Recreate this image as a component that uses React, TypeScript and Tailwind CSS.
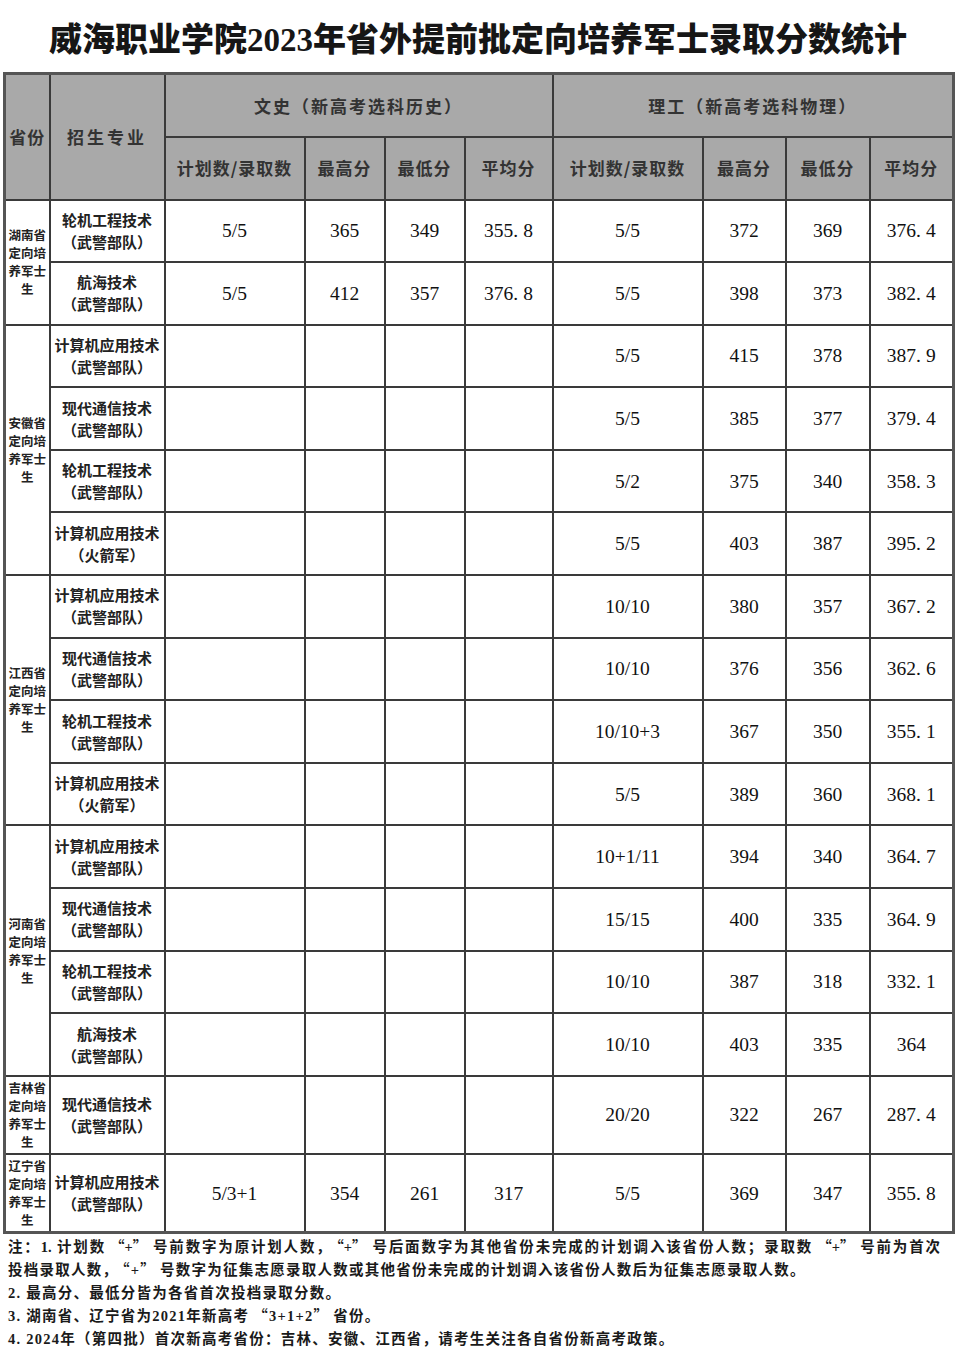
import React from 'react';

type Row = {
  major: string;
  sub: string;
  wen?: [string, string, string, string];
  li: [string, string, string, string];
};

type Group = { province: string; rows: Row[]; tall?: boolean };

const groups: Group[] = [
  {
    province: '湖南省定向培养军士生',
    rows: [
      { major: '轮机工程技术', sub: '（武警部队）', wen: ['5/5', '365', '349', '355.8'], li: ['5/5', '372', '369', '376.4'] },
      { major: '航海技术', sub: '（武警部队）', wen: ['5/5', '412', '357', '376.8'], li: ['5/5', '398', '373', '382.4'] },
    ],
  },
  {
    province: '安徽省定向培养军士生',
    rows: [
      { major: '计算机应用技术', sub: '（武警部队）', li: ['5/5', '415', '378', '387.9'] },
      { major: '现代通信技术', sub: '（武警部队）', li: ['5/5', '385', '377', '379.4'] },
      { major: '轮机工程技术', sub: '（武警部队）', li: ['5/2', '375', '340', '358.3'] },
      { major: '计算机应用技术', sub: '（火箭军）', li: ['5/5', '403', '387', '395.2'] },
    ],
  },
  {
    province: '江西省定向培养军士生',
    rows: [
      { major: '计算机应用技术', sub: '（武警部队）', li: ['10/10', '380', '357', '367.2'] },
      { major: '现代通信技术', sub: '（武警部队）', li: ['10/10', '376', '356', '362.6'] },
      { major: '轮机工程技术', sub: '（武警部队）', li: ['10/10+3', '367', '350', '355.1'] },
      { major: '计算机应用技术', sub: '（火箭军）', li: ['5/5', '389', '360', '368.1'] },
    ],
  },
  {
    province: '河南省定向培养军士生',
    rows: [
      { major: '计算机应用技术', sub: '（武警部队）', li: ['10+1/11', '394', '340', '364.7'] },
      { major: '现代通信技术', sub: '（武警部队）', li: ['15/15', '400', '335', '364.9'] },
      { major: '轮机工程技术', sub: '（武警部队）', li: ['10/10', '387', '318', '332.1'] },
      { major: '航海技术', sub: '（武警部队）', li: ['10/10', '403', '335', '364'] },
    ],
  },
  {
    province: '吉林省定向培养军士生',
    tall: true,
    rows: [{ major: '现代通信技术', sub: '（武警部队）', li: ['20/20', '322', '267', '287.4'] }],
  },
  {
    province: '辽宁省定向培养军士生',
    tall: true,
    rows: [
      { major: '计算机应用技术', sub: '（武警部队）', wen: ['5/3+1', '354', '261', '317'], li: ['5/5', '369', '347', '355.8'] },
    ],
  },
];

const cjk = '"Noto Sans CJK SC", "Noto Sans", sans-serif';
const serif = '"Liberation Serif", "Noto Sans CJK SC", serif';

// decimal point in the scan is set wide, like a full-width dot
const Num = ({ v }: { v: string }) => {
  const i = v.indexOf('.');
  if (i < 0 || v.includes('/')) return <>{v}</>;
  return (
    <>
      {v.slice(0, i)}
      <span className="mr-[5px]">.</span>
      {v.slice(i + 1)}
    </>
  );
};

// curly quotes in the scan take a full em each
const Q = ({ t }: { t: string }) => (
  <span className="mx-[4px]">
    “<span style={{ fontFamily: serif }}>{t}</span>”
  </span>
);

const S = ({ t }: { t: string }) => (
  <span className="whitespace-pre" style={{ fontFamily: serif }}>
    {t}
  </span>
);

const td = 'border-2 border-[#3a3a3a] text-center align-middle p-0';
const th = 'border-2 border-[#3a3a3a] bg-[#a9a9a9] text-center align-middle p-0 font-bold text-[#333] text-[17px]';

export default function App() {
  return (
    <div className="w-[956px] min-h-[1363px] bg-white text-[#111]" style={{ fontFamily: cjk }}>
      <h1
        className="pt-[15px] h-[70px] text-center text-[33px] font-black leading-[44px] text-[#161616]"
        style={{ fontFamily: '"Noto Sans CJK SC", "Liberation Serif", serif' }}
      >
        威海职业学院<span style={{ fontFamily: '"Liberation Serif", serif' }}>2023</span>年省外提前批定向培养军士录取分数统计
      </h1>

      <div className="pl-[3px] pt-[2px]">
        <table className="w-[949px] table-fixed border-collapse border-[3px] border-[#555]">
          <colgroup>
            <col className="w-[45px]" />
            <col className="w-[115px]" />
            <col className="w-[140px]" />
            <col className="w-[80px]" />
            <col className="w-[80px]" />
            <col className="w-[88px]" />
            <col className="w-[150px]" />
            <col className="w-[83px]" />
            <col className="w-[84px]" />
            <col className="w-[84px]" />
          </colgroup>
          <thead>
            <tr className="h-[63px]">
              <th rowSpan={2} className={th + ' tracking-[1px]'}>省份</th>
              <th rowSpan={2} className={th + ' tracking-[3px]'}>招生专业</th>
              <th colSpan={4} className={th + ' tracking-[2px]'}>文史（新高考选科历史）</th>
              <th colSpan={4} className={th + ' tracking-[2px]'}>理工（新高考选科物理）</th>
            </tr>
            <tr className="h-[63px]">
              {['计划数/录取数', '最高分', '最低分', '平均分', '计划数/录取数', '最高分', '最低分', '平均分'].map((h, i) => (
                <th key={i} className={th + ' tracking-[1px]'}>
                  {h}
                </th>
              ))}
            </tr>
          </thead>
          <tbody>
            {groups.map((g) =>
              g.rows.map((r, ri) => (
                <tr key={g.province + ri} className={g.tall ? 'h-[78.5px]' : 'h-[62.6px]'}>
                  {ri === 0 && (
                    <td rowSpan={g.rows.length} className={td + ' text-[12.5px] font-bold leading-[18px] text-[#222]'}>
                      <div className="mx-auto w-[39px] break-all">{g.province}</div>
                    </td>
                  )}
                  <td className={td + ' text-[15px] font-bold leading-[22px] text-[#222]'}>
                    <div>{r.major}</div>
                    <div>{r.sub}</div>
                  </td>
                  {[0, 1, 2, 3].map((k) => (
                    <td key={'w' + k} className={td + ' text-[19.5px] text-[#111]'} style={{ fontFamily: serif }}>
                      {r.wen ? <Num v={r.wen[k]} /> : null}
                    </td>
                  ))}
                  {[0, 1, 2, 3].map((k) => (
                    <td key={'l' + k} className={td + ' text-[19.5px] text-[#111]'} style={{ fontFamily: serif }}>
                      <Num v={r.li[k]} />
                    </td>
                  ))}
                </tr>
              ))
            )}
          </tbody>
        </table>
      </div>

      <div className="pl-[8px] pr-[16px] pt-[1px] text-[14.5px] font-bold leading-[21px] text-[#1a1a1a]">
        <p className="text-justify [text-align-last:justify] whitespace-nowrap">
          注：<S t="1. " />计划数<Q t="+" />号前数字为原计划人数，<Q t="+" />号后面数字为其他省份未完成的计划调入该省份人数；录取数<Q t="+" />号前为首次
        </p>
        <p className="whitespace-nowrap tracking-[1.25px]">
          投档录取人数，<Q t="+" />号数字为征集志愿录取人数或其他省份未完成的计划调入该省份人数后为征集志愿录取人数。
        </p>
        <p className="tracking-[1.25px]">
          <S t="2. " />最高分、最低分皆为各省首次投档录取分数。
        </p>
        <p className="tracking-[1.25px]">
          <S t="3. " />湖南省、辽宁省为<S t="2021" />年新高考<Q t="3+1+2" />省份。
        </p>
        <p className="tracking-[1.25px]">
          <S t="4. 2024" />年（第四批）首次新高考省份：吉林、安徽、江西省，请考生关注各自省份新高考政策。
        </p>
      </div>
    </div>
  );
}
